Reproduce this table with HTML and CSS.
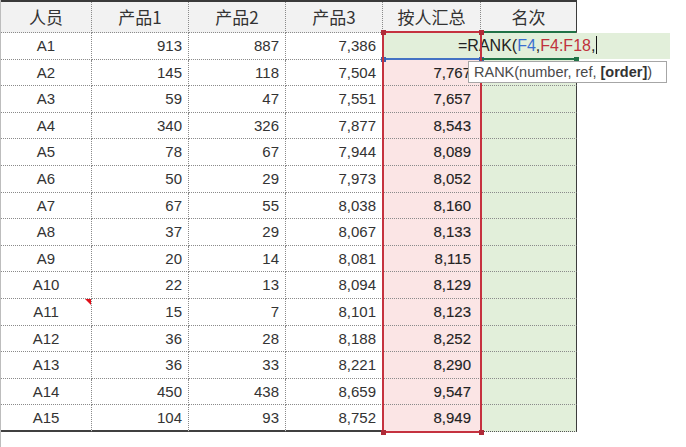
FILE: index.html
```html
<!DOCTYPE html>
<html lang="zh">
<head>
<meta charset="utf-8">
<title>RANK</title>
<link rel="stylesheet" href="styles.css">
</head>
<body>
<div class="sheet">
  <div class="table">
    <div class="row head">
      <div class="c">人员</div><div class="c">产品1</div><div class="c">产品2</div><div class="c">产品3</div><div class="c">按人汇总</div><div class="c">名次</div>
    </div>
    <div class="row"><div class="c name">A1</div><div class="c num">913</div><div class="c num">887</div><div class="c num">7,386</div><div class="c num sum"></div><div class="c rank"></div></div>
    <div class="row"><div class="c name">A2</div><div class="c num">145</div><div class="c num">118</div><div class="c num">7,504</div><div class="c num sum">7,767</div><div class="c rank"></div></div>
    <div class="row"><div class="c name">A3</div><div class="c num">59</div><div class="c num">47</div><div class="c num">7,551</div><div class="c num sum">7,657</div><div class="c rank"></div></div>
    <div class="row"><div class="c name">A4</div><div class="c num">340</div><div class="c num">326</div><div class="c num">7,877</div><div class="c num sum">8,543</div><div class="c rank"></div></div>
    <div class="row"><div class="c name">A5</div><div class="c num">78</div><div class="c num">67</div><div class="c num">7,944</div><div class="c num sum">8,089</div><div class="c rank"></div></div>
    <div class="row"><div class="c name">A6</div><div class="c num">50</div><div class="c num">29</div><div class="c num">7,973</div><div class="c num sum">8,052</div><div class="c rank"></div></div>
    <div class="row"><div class="c name">A7</div><div class="c num">67</div><div class="c num">55</div><div class="c num">8,038</div><div class="c num sum">8,160</div><div class="c rank"></div></div>
    <div class="row"><div class="c name">A8</div><div class="c num">37</div><div class="c num">29</div><div class="c num">8,067</div><div class="c num sum">8,133</div><div class="c rank"></div></div>
    <div class="row"><div class="c name">A9</div><div class="c num">20</div><div class="c num">14</div><div class="c num">8,081</div><div class="c num sum">8,115</div><div class="c rank"></div></div>
    <div class="row"><div class="c name">A10</div><div class="c num">22</div><div class="c num">13</div><div class="c num">8,094</div><div class="c num sum">8,129</div><div class="c rank"></div></div>
    <div class="row"><div class="c name comment">A11</div><div class="c num">15</div><div class="c num">7</div><div class="c num">8,101</div><div class="c num sum">8,123</div><div class="c rank"></div></div>
    <div class="row"><div class="c name">A12</div><div class="c num">36</div><div class="c num">28</div><div class="c num">8,188</div><div class="c num sum">8,252</div><div class="c rank"></div></div>
    <div class="row"><div class="c name">A13</div><div class="c num">36</div><div class="c num">33</div><div class="c num">8,221</div><div class="c num sum">8,290</div><div class="c rank"></div></div>
    <div class="row"><div class="c name">A14</div><div class="c num">450</div><div class="c num">438</div><div class="c num">8,659</div><div class="c num sum">9,547</div><div class="c rank"></div></div>
    <div class="row last"><div class="c name">A15</div><div class="c num">104</div><div class="c num">93</div><div class="c num">8,752</div><div class="c num sum">8,949</div><div class="c rank"></div></div>

    <div class="editor">=RANK(<span class="ref-blue">F4</span>,<span class="ref-red">F4:F18</span>,<span class="caret"></span></div>
    <div class="box-blue"><i class="h bl"></i><i class="h br"></i></div>
    <div class="box-green"><i class="h gr"></i></div>
    <div class="box-red"><i class="h tl"></i><i class="h tr"></i><i class="h bl"></i><i class="h br"></i></div>
    <div class="tip">RANK(number, ref, <b>[order]</b>)</div>
  </div>
</div>
</body>
</html>
```

FILE: styles.css
```css
* { box-sizing: border-box; }
html, body { margin: 0; padding: 0; background: #fff; }
body { width: 686px; height: 447px; overflow: hidden; }

.sheet {
  height: 447px;
  border-left: 1px solid #bdbdbd;
  font-family: "Liberation Sans", Arial, "Noto Sans CJK SC", sans-serif;
  color: #333;
}

.table {
  position: relative;
  width: 576px;
}

.row {
  display: grid;
  grid-template-columns: 91px 97px 97px 97px 98px 96px;
  height: 26.6px;
}

.c {
  border-right: 1px dotted #8a8a8a;
  border-bottom: 1px dotted #8a8a8a;
  font-size: 15px;
  line-height: 25px;
  white-space: nowrap;
  overflow: hidden;
}
.c:last-child { border-right: 1px solid #3c3c3c; }

.head {
  height: 33px;
  border-top: 2px solid #3a3a3a;
  background: #f2f2f2;
}
.head .c {
  font-family: "Noto Sans CJK SC", sans-serif;
  font-size: 17px;
  line-height: 30px;
  text-align: center;
  color: #333;
}

.name { text-align: center; }
.num { text-align: right; padding-right: 6px; }
.sum {
  background: #fbe5e5;
  padding-right: 9px;
  color: #222;
  -webkit-text-stroke: 0.12px #222;
}
.rank { background: #e2efda; }

.last .c { border-bottom: 2px solid #404040; }
.last .sum { border-bottom: 1px dotted #8a8a8a; }
.last .rank { border-bottom: 1px dotted #555; }

.comment { position: relative; }
.comment::after {
  content: "";
  position: absolute;
  right: 0;
  top: 0;
  border-style: solid;
  border-width: 0 6px 6px 0;
  border-color: transparent #e0101a transparent transparent;
}

/* overlays */
.editor {
  position: absolute;
  left: 382px;
  top: 33px;
  width: 287px;
  height: 26px;
  background: #e2efda;
  font-size: 16px;
  line-height: 25px;
  padding-left: 75px;
  color: #222;
  white-space: nowrap;
}
.ref-blue { color: #3a6fd0; }
.ref-red { color: #c0323c; }
.caret {
  display: inline-block;
  width: 1px;
  height: 18px;
  background: #111;
  vertical-align: -3px;
  margin-left: 1px;
}

.box-red, .box-blue, .box-green { position: absolute; }
.box-red {
  left: 381px;
  top: 31px;
  width: 100px;
  height: 402px;
  border: 2px solid #c5323f;
}
.box-blue {
  left: 381px;
  top: 31px;
  width: 100px;
  height: 29px;
  border: 2px solid #4472c4;
}
.box-green {
  left: 480px;
  top: 31px;
  width: 95px;
  height: 29px;
  border-top: 2px solid #217346;
  border-bottom: 2px solid #217346;
}

.h {
  position: absolute;
  width: 5px;
  height: 5px;
}
.box-red .h { background: #b02a37; }
.box-blue .h { background: #3b64b0; }
.box-green .h { background: #217346; }
.h.tl { left: -3.5px; top: -3.5px; }
.h.tr { right: -3.5px; top: -3.5px; }
.h.bl { left: -3.5px; bottom: -3.5px; }
.h.br { right: -3.5px; bottom: -3.5px; }
.h.gr { right: -3px; bottom: -3.5px; }

.tip {
  position: absolute;
  left: 467px;
  top: 61px;
  width: 199px;
  height: 22px;
  border: 1px solid #a6a6a6;
  background: #fff;
  color: #4a4a4a;
  font-size: 14.5px;
  line-height: 20px;
  padding-left: 5px;
  white-space: nowrap;
}
.tip b { color: #333; }
```
